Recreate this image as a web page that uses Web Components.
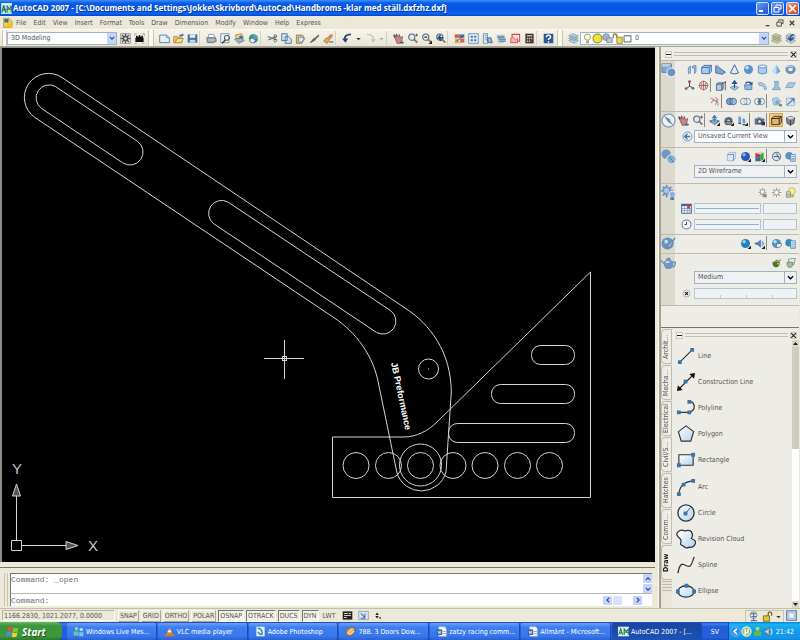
<!DOCTYPE html>
<html lang="en">
<head>
<meta charset="utf-8">
<title>AutoCAD 2007</title>
<style>
html, body { margin: 0; height: 100%; }
body {
  --face: #ece9d8; --pane: #edece6; --line: #aca899; --blue: #1b5cd8; --field: #9db3c6;
  font: 7px/10px "DejaVu Sans Condensed", "DejaVu Sans", "Liberation Sans", sans-serif;
  color: #555; background: var(--face);
}
</style>
</head>
<body>
<cad-app></cad-app>
<script>
const B = '#3f74ad', L = '#a9cdee', D = '#2b4f7c';
const tag = '<path d="M16 11v5h-5z" fill="#222"/>';
const arrow = '<path d="M2 5l6 6 6-6" fill="none" stroke="#33508c" stroke-width="3"/>';
const sphere = (c, hi) => `<circle cx="8" cy="8" r="6.5" fill="${c}"/><circle cx="6" cy="5.5" r="2.5" fill="${hi}" opacity=".8"/>`;
const lens = `<circle cx="7" cy="6" r="4.5" fill="#dce9f5" stroke="#55687c" stroke-width="1.6"/><path d="M10 9l5 5" stroke="#8a7450" stroke-width="2.5"/>`;
const stack = (c) => `<path d="M1 11l6-3 8 3-6 4zM1 7.500l6-3 8 3-6 4zM1 4l6-3 8 3-6 4z" fill="${c}" stroke="#5d7ba0" stroke-width=".8"/>`;
const globe = `<circle cx="8" cy="8" r="6.500" fill="#4aa3d0"/><path d="M3 4q4-3 5 1t-4 4-3-1zM9 9q5-2 5 1t-5 3z" fill="#3f9a57"/>`;
const box = `<path d="M1 5l3-3h11v9l-3 3H1z" fill="${L}" stroke="${B}" stroke-width="1.400"/><path d="M1 5h11v9M12 5l3-3" fill="none" stroke="${B}" stroke-width="1.400"/>`;
const ICONS = {
  app: '<rect width="16" height="16" fill="#b9ded6"/><path d="M1 14L4 4l3 10M2 10h5" fill="none" stroke="#1f6f60" stroke-width="1.600"/><path d="M9 14V4l3 5 3-5v10M8 9h8" fill="none" stroke="#1f6f60" stroke-width="1.400"/><path d="M1 1h14v2H1z" fill="#e8f6f2"/>',
  doc: '<path d="M1 2h8l4 4v9H1z" fill="#f5d34a" stroke="#ad8220"/><path d="M2 3h6v5H2z" fill="#2f6fb4"/><path d="M6 9h9l-2 6H5z" fill="#f3bd2f"/>',
  gear: '<rect x="1" y="1" width="14" height="14" fill="#dfe2de" stroke="#888"/><path d="M8 1v14M1 8h14M3 3l10 10M13 3L3 13" stroke="#555" stroke-width="2"/><circle cx="8" cy="8" r="4" fill="#555"/><circle cx="8" cy="8" r="1.700" fill="#eee"/>',
  home: '<path d="M3 4h2v1h2V3h2v2h2V4h2v3h1v6H2V7h1z" fill="#111"/><path d="M1 1h3M12 1h3M1 15h3M12 15h3M1 1v3M15 1v3" stroke="#888"/>',
  fresh: '<path d="M1 3h10l4 4v7H1z" fill="#e3f0fb" stroke="#56799c" stroke-width="1.300"/><path d="M11 3v4h4" fill="none" stroke="#56799c"/>',
  open: '<path d="M1 5h5l1 2h6v7H1z" fill="#eac264" stroke="#9e7a2c"/><path d="M3 14l3-6h9l-3 6z" fill="#f8df8e" stroke="#9e7a2c"/><path d="M8 5q2-4 6-3l-1-2 3 3-3 2" fill="#45709c"/>',
  save: `<path d="M1 2h14v12H1z" fill="${B}"/><path d="M4 2h8v5H4z" fill="#dfeaf5"/><path d="M4 10h8v4H4z" fill="#c9d4df"/>`,
  print: '<path d="M4 2h7l2 5H3z" fill="#fff" stroke="#5e7590"/><path d="M1 7h13l1 5-4 2H2z" fill="#91a8c4" stroke="#4c6180"/><path d="M4 10h8" stroke="#f1d270" stroke-width="1.500"/>',
  preview: '<path d="M1 1h12v13H1z" fill="#e6f0fa" stroke="#56799c"/><circle cx="10" cy="7" r="3.500" fill="#fff" stroke="#556" stroke-width="1.500"/><path d="M8 10l-5 5" stroke="#333" stroke-width="2"/>',
  publish: '<path d="M2 3l9-2 3 6-9 5z" fill="#f4d76b" stroke="#8c7438"/><path d="M1 9l9-2 5 4-8 4z" fill="#9cb4ce" stroke="#50647f"/><circle cx="10" cy="6" r="2.500" fill="#46709f"/>',
  dwf: globe + '<path d="M5 7l6 3-3 5-6-3z" fill="#eef" stroke="#557"/>',
  cut: '<path d="M1 5l13 5M2 10l12-5" stroke="#6b7684" stroke-width="1.600"/><circle cx="12" cy="4.500" r="2" fill="none" stroke="#456"/><circle cx="12" cy="11" r="2" fill="none" stroke="#456"/>',
  copy: '<path d="M1 1h8v10H1zM6 5h5l4 4v6H6z" fill="#cfe2f4" stroke="#4f749b" stroke-width="1.300"/>',
  paste: '<path d="M2 3h9l3 5-4 7H2z" fill="#e2c27c" stroke="#74643f"/><path d="M5 6h6l2 3-3 4H5z" fill="#d9e9f6" stroke="#5b7896"/>',
  brush: '<path d="M2 14l5-6 2 2z" fill="#8c6648" stroke="#4b3524"/><path d="M7 8l7-6 1 2-6 6z" fill="#58697b"/>',
  match: '<path d="M1 12l4-5 4 3-3 5z" fill="#e7ae42" stroke="#946b24"/><path d="M6 6l6-5 3 3-5 6z" fill="#c98f60"/><path d="M9 12h6v2H9z" fill="#678"/>',
  undo: '<path d="M13 2Q3 2 4 10" fill="none" stroke="#26466d" stroke-width="2.500"/><path d="M0 8h9l-4 6z" fill="#26466d"/>',
  redo: '<path d="M3 2q10 0 9 8" fill="none" stroke="#c0c4c6" stroke-width="2"/><path d="M8 9h8l-4 5z" fill="#c0c4c6"/>',
  dot: '<path d="M3 7h10l-5 5z" fill="#333"/>',
  dotoff: '<path d="M3 7h10l-5 5z" fill="#aaa"/>',
  hand: '<path d="M3 8L2 3l3 3V1l3 5 1-4 2 5 3-2-1 5-2 5H6z" fill="#c98780" stroke="#7d4a4c"/><path d="M0 4h5M2 2v5M10 14h6M13 11v5" stroke="#345d8b" stroke-width="1.400"/>',
  zoom: lens + '<path d="M12 3h4M14 1v4" stroke="#333"/>',
  zoomwin: lens + '<path d="M5 6h4" stroke="#345" stroke-width="2"/>' + tag,
  zoomprev: lens + '<path d="M12 7H5l3-4M5 7l4 4" fill="none" stroke="#234c82" stroke-width="2.400"/>',
  props: '<path d="M1 2h6v5H1z" fill="#d8564c"/><path d="M7 2h8v5H7z" fill="#59779c"/><path d="M1 8h5l3 7H2z" fill="#dbb55a"/><path d="M9 8h6v6H9z" fill="#c66"/><path d="M2 13L14 4" stroke="#334"/>',
  center: `<path d="M1 1h14v14H1z" fill="#e5eef6" stroke="${B}"/><path d="M4 4h3v3H4zM9 4h3v3H9zM4 9h3v3H4zM9 9h3v3H9z" fill="${B}"/>`,
  pal: `<path d="M2 1h6v14H2z" fill="#e5eef6" stroke="${B}"/><path d="M4 4h3M4 7h3M4 10h3" stroke="${B}"/><path d="M8 7h5l2 7H9z" fill="#9ab6d0" stroke="${D}"/>`,
  sheet: '<path d="M1 3l11-1 3 9-4 3H3z" fill="#aac4dc"/><path d="M2 6h10M4 9h10M5 12h9" stroke="#557a9c" stroke-width="1.500"/>',
  markup: '<path d="M3 2h11v10H3z" fill="#fae1e1" stroke="#d04a4a" stroke-width="1.500"/><path d="M1 8q3-4 5 0t5 0v6H1z" fill="#f4b4b4" stroke="#c33"/>',
  calc: '<path d="M2 1h12v14H2z" fill="#3a3232"/><path d="M4 3h8v2H4z" fill="#b5c9b0"/><path d="M4 7h2v2H4zM7 7h2v2H7zM10 7h2v2h-2zM4 11h2v2H4zM7 11h2v2H7z" fill="#d9c9c0"/><path d="M10 11h2v2h-2z" fill="#e33"/>',
  help: '<rect x="1" y="1" width="14" height="14" rx="1" fill="#2c5a94"/><path d="M5 6q0-3 3-3t3 3q0 1-3 3v1M8 12v2" fill="none" stroke="#fff" stroke-width="2"/>',
  layers: stack('#bcd3e8'), layers2: stack('#d9cf7a'),
  layers3: stack('#bcd3e8') + '<path d="M13 2Q7 3 8 9M5 7l3 4 4-4" fill="none" stroke="#2d4a78" stroke-width="2"/>',
  bulb: '<circle cx="8" cy="6" r="4.500" fill="#fffbd8" stroke="#8c8a5c" stroke-width="1.200"/><path d="M6 11h4v4H6z" fill="#a9a58a"/>',
  sun: '<circle cx="8" cy="8" r="6.500" fill="#efe23c" stroke="#8c8430" stroke-width="1.500"/>',
  vpsun: '<circle cx="6" cy="6" r="5" fill="#a6b4c2" stroke="#67788a"/><path d="M7 7h8v7H7z" fill="#b9c6d2" stroke="#67788a"/>',
  unlock: '<path d="M7 6h8v9H7z" fill="#e8dc4c" stroke="#75701f"/><path d="M7 7V3q-3-3-5 0v4" fill="none" stroke="#8c8430" stroke-width="2"/>',
  swatch: '<path d="M3 4h10v9H3z" fill="#fff" stroke="#555" stroke-width="1.300"/>',
  // dashboard
  big3d: '<path d="M1 2h10v9H1z" fill="#86a6cc" stroke="#587ba8"/><path d="M1 2h10l-3 3H1z" fill="#b7cde6"/><circle cx="11" cy="11" r="4.800" fill="#6d93c4" stroke="#fff"/>',
  compass: '<circle cx="8" cy="8" r="7" fill="#e9f0f5" stroke="#7693ac" stroke-width="1.200"/><path d="M3 3l7 4-2 3zM13 13L7 9l2-2z" fill="#6a89a8"/>',
  bigvs: '<circle cx="5.500" cy="5.500" r="5" fill="#6f97c5"/><circle cx="11" cy="11" r="5" fill="#8daed0" stroke="#e8eef4"/><path d="M9 8l4 6" stroke="#4c749f"/>',
  biglight: '<path d="M6 0v13M0 6h13M2 2l9 9M11 2l-9 9" stroke="#6a90bd" stroke-width="2"/><circle cx="6" cy="6" r="3.500" fill="#a9c8e6" stroke="#5c84b3"/><circle cx="12" cy="10" r="3.500" fill="#8fb2da" stroke="#eef"/><path d="M10 13h4v3h-4z" fill="#5a7ba2"/>',
  bigmat: '<circle cx="7" cy="8" r="6.500" fill="#6c93c0"/><circle cx="5.500" cy="6" r="2" fill="#c4daf0"/><path d="M15 2l-7 8-2 3 4-2z" fill="#dfe7ee" stroke="#55779f"/>',
  teapot: '<path d="M3 7q5-3 10 0 1 6-3 8H6Q2 12 3 7z" fill="#6f95c2"/><path d="M3 9L0 6M13 8q3-2 2 2t-3 2M6 5q2-3 4 0z" stroke="#6f95c2" stroke-width="1.600" fill="none"/><path d="M5 8q3-1 4 0" stroke="#d5e5f5" stroke-width="1.500"/>',
  polysolid: `<path d="M2 5l3-2v10l-3 1zM8 3l5-1v9l-2 3V5L8 6z" fill="${L}" stroke="${B}"/>`,
  box, wedge: `<path d="M1 3l14 9-4 3-10-2z" fill="#7fa9d2" stroke="${D}"/><path d="M1 3l2-1 12 10" fill="${L}" stroke="${B}"/>`,
  cone: `<path d="M8 1l6 12q-6 3-12 0z" fill="#d9ebf8" stroke="${D}" stroke-width="1.200"/>`,
  sphere: sphere('#5b91cc', '#e4f2fd'),
  cyl: `<path d="M2 3v10q6 3 12 0V3z" fill="${L}" stroke="${B}"/><ellipse cx="8" cy="3.500" rx="6" ry="2" fill="#e6f3fd" stroke="${B}"/>`,
  pyramid: `<path d="M8 1l6 10-6 4-6-4z" fill="#78a8d8"/><path d="M8 1v14l-6-4z" fill="#c7e0f5"/>`,
  torus: '<ellipse cx="8" cy="8" rx="5.500" ry="4.500" fill="none" stroke="#6a92b8" stroke-width="4"/><path d="M3 5q4-4 9 0" fill="none" stroke="#d4e9f8" stroke-width="1.500"/>',
  ucs: '<path d="M8 9V2M8 9l-5 4M8 9l6 3" stroke="#333" stroke-width="1.300"/><circle cx="8" cy="2.500" r="2" fill="#944"/><circle cx="3" cy="12.500" r="2" fill="#a55"/><circle cx="13" cy="12" r="2" fill="#577"/>',
  ucs2: '<circle cx="8" cy="8" r="6" fill="none" stroke="#555"/><path d="M8 1v14M1 8h14M4 3q4 5 0 10M12 3q-4 5 0 10" fill="none" stroke="#b05050" stroke-width="1.200"/>',
  extr: `<path d="M2 6l3-2h7v9l-2 2H2z" fill="${L}" stroke="#445"/><path d="M2 6h8v9M10 6l2-2M15 15V3M13 5l2-3 1 3" fill="none" stroke="#333"/>`,
  press: `<path d="M2 11l6-3 6 3-6 4z" fill="${L}" stroke="${B}"/><path d="M8 12V3M5 5l3-4 3 4z" fill="${B}" stroke="${D}" stroke-width="1.500"/>`,
  sweep: `<path d="M2 7h11v7H3z" fill="#8db8df" stroke="${B}"/><path d="M3 4q5-4 10 0l1-2v5H9l2-1Q7 2 4 6z" fill="${D}"/>`,
  revolve: `<path d="M2 4q9-2 12 9l-3 1Q9 7 3 8z" fill="${L}" stroke="#7292ae"/>`,
  loft: `<path d="M5 2h6l-1 6 4 6H2l4-6z" fill="#9bc0e2" stroke="#6c92b5"/>`,
  plane: `<path d="M5 4h10l-4 7H1z" fill="#a9cbe9" stroke="#6c92b5"/>`,
  helix: '<path d="M2 3l5 2-4 5M9 2l4 3-4 8M6 7h7" fill="none" stroke="#c88" stroke-width="1.500"/><path d="M9 6l4 3v5" stroke="#56a" fill="none"/>',
  union: `<circle cx="5.500" cy="8" r="4.800" fill="#79a6cd" stroke="${D}"/><circle cx="10.500" cy="8" r="4.800" fill="#79a6cd" fill-opacity=".6" stroke="${D}"/>`,
  subtract: `<circle cx="10.500" cy="8" r="4.800" fill="#e7f0f6" stroke="${B}"/><circle cx="5.500" cy="8" r="4.800" fill="#e7f0f6" fill-opacity=".5" stroke="#567"/>`,
  inter: `<circle cx="10.500" cy="8" r="4.800" fill="none" stroke="#567"/><circle cx="5.500" cy="8" r="4.800" fill="none" stroke="#567"/><path d="M8 4q4 4 0 8-4-4 0-8" fill="${B}"/>`,
  slice: `<path d="M2 4l7-2 5 5-2 6H4z" fill="#b4d0ea" stroke="#7b9cbd"/><circle cx="9" cy="9" r="3" fill="#7ea8d1"/><path d="M12 12h4v3h-4z" fill="#678"/>`,
  flat: '<path d="M2 3h12v11H2z" fill="#cfe2f1" stroke="#8eb0cc"/><path d="M3 13l10-9M8 4h5v5" stroke="#527ea9" fill="none" stroke-width="1.500"/>',
  orbit: `<path d="M2 9l6-3 6 3-6 5z" fill="#8db3d8" stroke="${D}"/><path d="M8 10V1M5 5l3-4 3 4M1 8l3 3M15 8l-3 3" stroke="${B}" stroke-width="1.800" fill="none"/>` + tag,
  swivel: '<path d="M2 12q-1-9 6-9t6 8l-4 1q1-5-2-5t-2 5z" fill="#5d6a75"/><path d="M4 9h8v5H4z" fill="#8795a3" stroke="#333"/>' + tag,
  walk: `<path d="M2 2q4-1 4 3v5H2zM8 5q4-1 4 3v4H8z" fill="#6da0cf"/><path d="M2 11h4v2H2zM8 13h4v2H8z" fill="${D}"/>` + tag,
  camera: '<path d="M1 5h14v9H1z" fill="#5f7389"/><path d="M5 3h5v3H5z" fill="#88a"/><circle cx="8" cy="9.500" r="3" fill="#b9d6ee" stroke="#223"/><path d="M11 10h5v5h-5z" fill="#334"/>',
  parallel: '<path d="M1 5l3-3h11v9l-3 3H1z" fill="#e3b56c" stroke="#333" stroke-width="1.300"/><path d="M1 5h11v9M12 5l3-3" fill="none" stroke="#333" stroke-width="1.500"/>',
  persp: '<path d="M2 4l6-2 6 2-1 8-5 3-5-3z" fill="#7d868e" stroke="#333"/><path d="M2 4l6 3 6-3-6-2z" fill="#d3d8dc"/><path d="M8 7v8" stroke="#222"/>',
  back: `<circle cx="8" cy="8" r="6.500" fill="#eef3f6" stroke="#6b8cab" stroke-width="1.300"/><path d="M12 8H5M8 4L4 8l4 4" fill="none" stroke="${B}" stroke-width="2"/>`,
  hidden: '<path d="M2 5l3-3h9v8l-3 4H2z" fill="#d6e4f7" stroke="#8ba8d6"/><path d="M2 5h9v9" fill="none" stroke="#7795cb" stroke-width="1.500"/>',
  shade: sphere('#2c58b8', '#a8c6f4') + tag,
  rgb: '<path d="M2 3h7v6H2z" fill="#c9363a"/><path d="M2 9h7v6H2z" fill="#3868b0"/><path d="M9 5l5-3v10l-5 3z" fill="#35a34a"/><path d="M2 3l4-2h8L9 5z" fill="#ded0b4"/>' + tag,
  vs1: '<circle cx="8" cy="8" r="6" fill="#d5dee5" stroke="#708498" stroke-width="1.500"/><path d="M4 8h8M8 4l5 8" stroke="#54708e" stroke-width="1.500"/>',
  vs2: `<circle cx="6" cy="7" r="5.500" fill="#5793c7"/><path d="M8 5h7v10H8z" fill="#eef4f9" stroke="${B}"/><path d="M9 8h5M9 11h5M9 13h5" stroke="${B}"/>`,
  light1: '<path d="M8 1v13M2 8h12M4 3l8 10M12 3L4 13" stroke="#999"/><circle cx="8" cy="7" r="3.500" fill="#eee" stroke="#777"/><path d="M9 10h5v5H9z" fill="#888"/>',
  light2: '<path d="M8 1v14M1 8h14M3 3l10 10M13 3L3 13" stroke="#a2a2a2" stroke-width="1.500"/><circle cx="8" cy="8" r="3.500" fill="#f5f5f5" stroke="#888"/>',
  light3: '<circle cx="10" cy="6" r="5" fill="#f7ef9a" stroke="#b5a440"/><path d="M2 7h6v8H2z" fill="#dfe8f0" stroke="#777"/><path d="M4 9v5M6 9v5" stroke="#777"/><path d="M9 11h4v4H9z" fill="#c7a93c"/>',
  cal: '<path d="M1 2h14v13H1z" fill="#fff" stroke="#46669a" stroke-width="1.500"/><path d="M1 3h14" stroke="#46669a" stroke-width="3"/><path d="M5 3v12M9 3v12M12 3v12M1 8h14M1 11h14" stroke="#6884b0"/><path d="M9 4h4v4H9z" fill="#d33"/>',
  clock: '<circle cx="8" cy="8" r="6.500" fill="#f6f8fb" stroke="#667a9c" stroke-width="1.500"/><path d="M8 4v4H5" fill="none" stroke="#333" stroke-width="1.300"/>',
  mat: sphere('#1f7fbf', '#b5e3f7') + tag,
  attach: `<path d="M1 7l4-1 5-4v12l-5-4-4-1z" fill="#4b83bb"/><path d="M12 4v8M14 6v4" stroke="${B}"/>` + tag,
  map: sphere('#4792c8', '#d9effa') + '<path d="M8 8h7v3l-3 3H8z" fill="#dfeaf2" stroke="#567"/>',
  matlist: `<circle cx="6" cy="7" r="5.500" fill="#2d8bc6"/><path d="M8 4h7v11H8z" fill="#eef4f9" stroke="${B}"/><path d="M9 7h5M9 10h5M9 13h5" stroke="${B}"/>`,
  render: '<path d="M2 8q6-4 11 0-1 6-4 7H6Q2 13 2 8z" fill="#4d6f3c"/><path d="M5 6q3-4 6-1l4-3-2 5z" fill="#83a457"/><path d="M9 9l5 3" stroke="#e2c136" stroke-width="2"/>',
  rset: '<path d="M5 3l10-1-2 9H5z" fill="#e9efe9" stroke="#777"/><path d="M3 8q5-2 9 0-1 6-3 7H5Q2 12 3 8z" fill="#a4b8a2" stroke="#6d7d6c"/>',
  cancel: '<circle cx="8" cy="8" r="5" fill="#f1f1f1" stroke="#999"/><path d="M6 6l4 4M10 6l-4 4" stroke="#222" stroke-width="2"/>',
  // status bar and tray
  model: '<path d="M1 2h14v12H1z" fill="#222"/><path d="M3 5h6M3 8h10M3 11h4M10 5h3" stroke="#cfcfcf" stroke-width="1.500"/>',
  layout: '<path d="M1 2h14v12H1z" fill="#d9e6f2" stroke="#6e93b8"/><path d="M4 5l6 6M10 5v7H4" stroke="#3b6ea6" fill="none" stroke-width="1.500"/>',
  updown: '<path d="M3 7l4-6 4 6zM3 9h8l-4 6z" fill="#222"/><path d="M12 12h4v3h-4z" fill="#222"/>',
  comm: '<circle cx="8" cy="6" r="5" fill="#dfe5ea" stroke="#667f98"/><path d="M4 4h8M8 2v12M5 8h7M4 14h9" stroke="#5874a0" stroke-width="1.500"/>',
  lock: '<path d="M2 7h9v8H2z" fill="#dfc72d" stroke="#5b5010"/><path d="M9 7V3q2-3 5 0v4" fill="none" stroke="#5b5010" stroke-width="1.600"/>',
  clean: '<path d="M1 1h14v14H1z" fill="#c6dcf2" stroke="#567aa4" stroke-width="1.600"/><path d="M4 4h8v8H4z" fill="#e9f3fc" stroke="#88a8c8"/>',
  flag: '<path d="M2 4q3-3 6-1L7 8Q4 6 1 8z" fill="#e8512e"/><path d="M9 3q3 2 6 0l-1 5q-3 2-6 0z" fill="#86c440"/><path d="M1 9q3-2 6 0l-1 5q-3-2-6 0z" fill="#4d8be6"/><path d="M8 9q3 2 6 0l-1 5q-3 2-6 0z" fill="#f7cf35"/>',
  msn: '<circle cx="5" cy="4" r="2.500" fill="#8be08f"/><path d="M1 8h7v6H1z" fill="#64c7a0"/><circle cx="12" cy="5" r="2.500" fill="#a8e3f5"/><path d="M9 9h6v6H9z" fill="#74c3ec"/>',
  vlc: '<path d="M8 1l4 11H4z" fill="#f08a2c"/><path d="M6 6h4l1 3H5z" fill="#fff"/><path d="M1 12h14v3H1z" fill="#e37324"/>',
  ps: '<path d="M2 1h12v14H2z" fill="#e9f2f4"/><path d="M4 3q8 2 6 10M4 9l5 4" stroke="#3b98a8" stroke-width="2.400" fill="none"/>',
  amp: '<ellipse cx="8" cy="8" rx="7" ry="5" transform="rotate(-40 8 8)" fill="#e8a74d" stroke="#8d5b22"/><path d="M4 11l7-7M7 13l6-6" stroke="#fae1ae" stroke-width="1.500"/>',
  word: '<path d="M4 1h9l2 3v11H4z" fill="#f4f7fb" stroke="#aac"/><path d="M1 5h8v8H1z" fill="#2e5fae"/><path d="M3 7l1 4 1-3 1 3 1-4" fill="none" stroke="#fff"/><path d="M10 8h4M10 11h4" stroke="#77a"/>',
  cad: '<path d="M0 1h16v14H0z" fill="#dff1e6"/><path d="M1 13L4 4l3 9M2 10h4M9 13V4l3 4 3-4v9M8 9h8" fill="none" stroke="#217c66" stroke-width="1.500"/>',
  chev: '<circle cx="8" cy="8" r="7" fill="#2f8ce8" stroke="#8ec5fa"/><path d="M10 4L6 8l4 4" fill="none" stroke="#fff" stroke-width="2.500"/>',
  ut: '<circle cx="8" cy="8" r="6.500" fill="#8bbc6a" stroke="#dbe9d0" stroke-width="2"/><path d="M6 4v6h4V4M6 10v3" fill="none" stroke="#fff" stroke-width="2"/>',
  buddy: '<circle cx="8" cy="4" r="3" fill="#a9dc5b"/><path d="M3 9q5-4 10 0v5H3z" fill="#6db83a"/>',
  vol: '<path d="M2 6h3l4-4v12l-4-4H2z" fill="#c9cdd6" stroke="#556"/><path d="M11 4q4 4 0 9" fill="none" stroke="#dde" stroke-width="1.600"/>',
  // drawing tools
  line: '<path d="M4 17L17 4" stroke="#333" stroke-width="1.200"/><path d="M2 15h4v4H2zM15 2h4v4h-4z" fill="#3a75aa"/>',
  xline: '<path d="M3 18L18 3" stroke="#222" stroke-width="1.400"/><path d="M1 20l1-6 5 5zM20 1l-6 1 5 5z" fill="#111"/><path d="M8 8h4v4H8z" fill="#3a75aa"/>',
  pline: '<path d="M3 15h11q6-2 5-7t-6-4" fill="none" stroke="#333" stroke-width="1.300"/><path d="M1 13h4v4H1zM12 13h4v4h-4zM12 2h4v4h-4z" fill="#3a75aa"/>',
  polygon: '<path d="M10.500 2l8 6-3 10h-10l-3-10z" fill="url(#g)" stroke="#333" stroke-width="1.200"/>',
  rect: '<path d="M3 5h15v11H3z" fill="url(#g)" stroke="#333" stroke-width="1.200"/><path d="M16 3h4v4h-4zM1 14h4v4H1z" fill="#3a75aa"/>',
  arc: '<path d="M3 18Q4 5 18 4" fill="none" stroke="#333" stroke-width="1.200"/><path d="M1 16h4v4H1zM6 6h4v4H6zM16 2h4v4h-4z" fill="#3a75aa"/>',
  circle: '<circle cx="10.500" cy="10.500" r="8.500" fill="url(#g)" stroke="#333" stroke-width="1.400"/><path d="M10 11l5-6" stroke="#357"/><path d="M8 9h4v4H8z" fill="#3a75aa"/>',
  cloud: '<path d="M4 10Q-1 6 2 3t7-1q7-2 8 3 1 2-1 5 6 2 4 6t-6 3q-4 2-6-1-4-1-3-4 1-2-1-4z" fill="url(#g)" stroke="#333" stroke-width="1.300"/>',
  spline: '<path d="M2 19Q4 8 8 10t6 2 5-10" fill="none" stroke="#333" stroke-width="1.400"/>',
  ellipse: '<ellipse cx="10.500" cy="11" rx="8.500" ry="6" fill="url(#g)" stroke="#333" stroke-width="1.400"/><path d="M9 3h4v4H9zM0 9h4v4H0zM17 9h4v4h-4z" fill="#3a75aa"/>',
};
const svg = (name, box = 16) => `<svg class="ico" viewBox="0 0 ${box} ${box}" aria-hidden="true"><defs><linearGradient id="g" x2="1" y2="1"><stop offset="0" stop-color="#fff"/><stop offset="1" stop-color="#b4d3ee"/></linearGradient></defs>${ICONS[name]}</svg>`;
const RESET = `*{box-sizing:border-box}button,input,select{font:inherit;color:inherit;margin:0;padding:0;border:0;background:none;border-radius:0;outline:0;min-width:0}
.ico{display:block;width:11px;height:11px;flex:none}`;
const define = (name, css, html) => customElements.define(name, class extends HTMLElement {
  connectedCallback() {
    if (this.shadowRoot) return;
    const root = this.attachShadow({ mode: 'open' });
    root.innerHTML = `<style>${RESET}${css}</style>${typeof html === 'function' ? html(this) : html}`;
  }
});

define('ui-icon', ':host{display:block;flex:none}', e => svg(e.getAttribute('name')));

define('tool-button', `
  :host{display:block;flex:none;width:14px}
  :host([narrow]){width:9px}
  button{display:flex;align-items:center;justify-content:center;width:100%;height:14px}
  :host([narrow]) .ico{width:7px;height:7px}
  :host([on]) button{background:#fbc878;outline:1px solid #d9a154;outline-offset:-1px}`,
  e => `<button aria-label="${e.getAttribute('label') || e.getAttribute('icon')}">${svg(e.getAttribute('icon'))}</button>`);

define('tool-sep', ':host{display:block;flex:none;width:5px;height:14px;border-left:1px solid #d6d2c2}:host([dark]){width:3px;border-color:#8d8a7c}', '');
define('tool-grip', ':host{display:block;flex:none;width:6px;height:16px;border:solid #c9c5b2;border-width:0 1px;margin:0 3px 0 2px;background:#faf9f3}', '');

define('drop-list', `
  :host{display:flex;border:1px solid var(--field);background:#fdfdfd;height:13px;min-width:0}
  label{flex:1;display:flex;align-items:center;min-width:0}
  select{appearance:none;flex:1;height:11px;line-height:11px;padding-left:3px;width:100%}
  .arrow{width:9px;align-self:stretch;background:#c3d3fb;display:flex;align-items:center;justify-content:center;pointer-events:none}
  .arrow svg{width:6px;height:6px}
  :host([plain]) .arrow{background:none;border-left:1px solid var(--field);width:12px}
  :host([plain]) .arrow svg{width:7px;height:7px;filter:brightness(0)}
  :host([dim]){background:#eff1f2}`,
  e => `<label><slot></slot><select aria-label="${e.getAttribute('label')}"><option>${e.getAttribute('value')}</option></select><span class="arrow"><svg viewBox="0 0 16 16">${arrow}</svg></span></label>`);

define('title-bar', `
  :host{display:flex;align-items:center;height:16px;padding:0 1px;gap:1px;color:#fff;font:bold 8px/14px "Open Sans","Noto Sans",sans-serif;
    background:linear-gradient(#3a90f7,#0a5be6 20%,#0355e2 55%,#0a63f5 85%,#0346c5)}
  h1{font:inherit;margin:0;flex:1;white-space:nowrap;overflow:hidden;text-shadow:1px 1px 0 #0b3a94}
  button{width:13px;height:13px;border:1px solid #cfe0fb;border-radius:2px;background:linear-gradient(135deg,#6a98f5,#1f51cf);display:flex;align-items:center;justify-content:center;margin-left:1px}
  button.close{background:linear-gradient(135deg,#f09a7c,#cf3d12)}
  button svg{width:9px;height:9px}`,
  `${svg('app')}<h1>AutoCAD 2007 - [C:\\Documents and Settings\\Jokke\\Skrivbord\\AutoCad\\Handbroms -klar med ställ.dxfzhz.dxf]</h1>
  <button aria-label="Minimize"><svg viewBox="0 0 9 9"><path d="M1 7h4" stroke="#fff" stroke-width="2"/></svg></button>
  <button aria-label="Restore"><svg viewBox="0 0 9 9"><path d="M3 3V1h5v4H6M1 3.500h5V8H1z" fill="none" stroke="#fff"/></svg></button>
  <button class="close" aria-label="Close"><svg viewBox="0 0 9 9"><path d="M1 1l7 7M8 1L1 8" stroke="#fff" stroke-width="1.600"/></svg></button>`);

define('menu-bar', `
  :host{display:flex;align-items:center;height:13px;padding:0 3px;background:var(--face)}
  nav{display:flex;gap:7px;flex:1;padding-left:2px}
  button{white-space:nowrap}
  .win{display:flex;gap:1px}.win button{width:11px;height:11px;display:grid;place-items:center}
  .win svg{width:8px;height:8px}`,
  `${svg('doc')}<nav>${'File Edit View Insert Format Tools Draw Dimension Modify Window Help Express'.split(' ').map(t => `<button>${t}</button>`).join('')}</nav>
  <div class="win"><button aria-label="Minimize drawing"><svg viewBox="0 0 9 9"><path d="M2 7.500h4" stroke="#444" stroke-width="1.500"/></svg></button>
  <button aria-label="Restore drawing"><svg viewBox="0 0 9 9"><path d="M3 3V1h5v4H6M1 3.500h5V8H1z" fill="none" stroke="#444"/></svg></button>
  <button aria-label="Close drawing"><svg viewBox="0 0 9 9"><path d="M2 2l5 5M7 2L2 7" stroke="#444" stroke-width="1.500"/></svg></button></div>`);

const tools = (s) => s.split(' ').map(n =>
  n === '|' ? '<tool-sep></tool-sep>' : n === '!' ? '<tool-sep dark></tool-sep>' : n === '#' ? '<tool-grip></tool-grip>' :
  n.startsWith('dot') ? `<tool-button narrow icon="${n}" label="More"></tool-button>` : n.endsWith('*') ? `<tool-button on icon="${n.slice(0, -1)}"></tool-button>` : `<tool-button icon="${n}"></tool-button>`).join('');

define('tool-bar', `
  :host{display:flex;align-items:center;height:18px;background:linear-gradient(#f6f4ea,#e9e6d6);border-top:1px solid #fbfaf5;border-bottom:1px solid #a8a596;padding-right:3px}
  .space{width:110px;margin-right:1px;flex:none}
  .first{margin-right:0;width:5px}
  .layer{flex:1}
  .icons{display:flex;padding-left:1px}.icons ui-icon{width:10px}`,
  `<tool-grip class="first"></tool-grip><drop-list class="space" label="Workspace" value="3D Modeling"></drop-list>${tools('gear home # fresh open save | print preview publish dwf | cut copy paste brush match | undo dot redo dotoff | hand zoom zoomwin zoomprev | props center pal sheet markup calc | help # layers')}
  <drop-list class="layer" label="Layer" value="0"><span class="icons"><ui-icon name="bulb"></ui-icon><ui-icon name="sun"></ui-icon><ui-icon name="vpsun"></ui-icon><ui-icon name="unlock"></ui-icon><ui-icon name="swatch"></ui-icon></span></drop-list>${tools('layers2 layers3')}`);

define('drawing-view', `
  :host{display:block;background:#000;border:solid #8f8d83;border-width:1px 0 0 2px;min-height:0;flex:1}
  svg{display:block;width:100%;height:100%}
  .w{fill:none;stroke:#d4d4d4;stroke-width:1}`,
  `<svg viewBox="2 48 653 514" preserveAspectRatio="xMinYMin meet" role="img" aria-label="Handbrake drawing"><g class="w">
  <path d="M62 77.500L405 308C430 324 451 352 451.300 392L446 472A25.500 25.500 0 0 1 397 473L379 386C374 356 356 332 333 317L35 117.500A24 24 0 0 1 62 77.500"/>
  <path d="M55.700 86.700L137.300 141.200A13 13 0 0 1 122.700 162.800L41.300 108.300A13 13 0 0 1 55.700 86.700"/>
  <path d="M228.200 202.200L390.700 310.700A13 13 0 0 1 376.300 332.300L213.800 223.800A13 13 0 0 1 228.200 202.200"/>
  <path d="M332.500 437H404C416 437 428 431 437 422L590.500 272V497.500H332.500z"/>
  <rect x="531.500" y="345.500" width="43" height="19" rx="9"/><rect x="491.500" y="384.500" width="83" height="19" rx="9"/><rect x="448.500" y="423.500" width="126" height="19" rx="9"/>
  ${[356, 388.5, 420.5, 453, 485, 517.5, 549.5].map(x => `<circle cx="${x}" cy="465.500" r="13"/>`).join('')}
  <circle cx="420.500" cy="465" r="21"/><circle cx="428.500" cy="369" r="10"/><path d="M428 369h1"/>
  <path d="M284.500 340v39M264 358.500h40"/><rect x="282.500" y="356.500" width="4" height="4"/>
  <path d="M11.500 540.500h10v10h-10zM16.500 540V484M22 545.500h56"/>
  <path d="M16.500 484l-4 12h8zM78 545.500l-12-4v8z" fill="#555"/></g>
  <g fill="#c4c4c4" font-family="Liberation Sans" font-size="15"><text x="12" y="474">Y</text><text x="88" y="551">X</text></g>
  <text transform="translate(391 363) rotate(78)" fill="#fff" font-family="Liberation Sans" font-weight="bold" font-size="9">JB Preformance</text></svg>`);

define('command-window', `
  :host{display:block;background:var(--face);border-top:1px solid #77756c;margin-top:5px;padding:5px 3px 2px 4px;font:8px/11px "Liberation Mono",monospace;color:#6d6d6d}
  .row{display:flex}.grip{width:4px;border:solid #c6c3b2;border-width:0 1px;margin-right:2px}
  .box{flex:1;border:solid #777;border-width:1px 0 0 1px;background:#fff}
  .hist{display:flex;height:20px;border-bottom:1px solid #b5b5b5}.hist p{margin:0;flex:1}
  .cmd{display:flex;height:12px;align-items:center}label{flex:none}input{flex:1}
  .v{width:9px;display:flex;flex-direction:column;gap:1px}.h{display:flex;gap:1px;margin-right:10px}
  .v button,.h button{width:9px;height:9px;background:#c3d3fb;border-radius:1px;display:grid;place-items:center}
  .h i{width:9px;background:#d6e1fd}.h b{width:9px}
  svg{width:6px;height:6px}`,
  (() => { const b = (r, l) => `<button aria-label="Scroll ${l}"><svg viewBox="0 0 16 16"><g transform="rotate(${r} 8 8)">${arrow}</g></svg></button>`;
  return `<div class="row"><div class="grip"></div><div class="box"><div class="hist"><p>Command: _open</p><div class="v">${b(180, 'up')}${b(0, 'down')}</div></div>
  <div class="cmd"><label for="c">Command:</label><input id="c"><div class="h">${b(90, 'left')}<i></i><b></b>${b(-90, 'right')}</div></div></div></div>`; })());

define('pane-head', `
  :host{display:flex;align-items:center;gap:2px;height:10px;padding:0 2px 0 4px}
  i{flex:1;height:4px;border:solid #c2bfb2;border-width:1px 0}
  button{width:7px;height:7px;border:1px solid #c9c6ba;background:#f7f6f2;display:grid;place-items:center}svg{width:5px;height:5px}`,
  `<button aria-label="Collapse"><svg viewBox="0 0 5 5"><path d="M0 2.500h5" stroke="#222"/></svg></button><i></i><button aria-label="Close panel"><svg viewBox="0 0 5 5"><path d="M0 0l5 5M5 0L0 5" stroke="#222" stroke-width="1.200"/></svg></button>`);

define('dash-section', `
  :host{display:flex;border-top:1px solid #bdbab0}
  .side{width:14px;flex:none;background:#dcd9ce;padding:1px 0}
  .side .ico{width:15px;height:15px}
  .body{flex:1;min-width:0;display:flex;flex-direction:column;padding:1px 2px 3px 5px;gap:2px}`,
  e => `<div class="side">${svg(e.getAttribute('icon'))}</div><div class="body"><slot></slot></div>`);

define('slider-row', `
  :host{display:flex;align-items:center;gap:2px;height:14px}
  .ico{margin:0 0 0 1px}
  input{background:#eff1f2;border:1px solid #b4c5d2;height:11px}
  input[type=range]{appearance:none;flex:2;width:0;background:linear-gradient(#8fb0cc,#8fb0cc) center/calc(100% - 2px) 1px no-repeat #f0f2f3}
  input[type=range]::-webkit-slider-thumb{appearance:none;width:1px;height:1px}
  input[type=text]{flex:1;width:0}
  :host([single]) input{background:repeating-linear-gradient(90deg,transparent 0 25px,#c5ced5 25px 26px) bottom/100% 3px no-repeat #f0f2f3}`,
  e => svg(e.getAttribute('icon')) + `<input type="range" aria-label="${e.getAttribute('label')}">` + (e.hasAttribute('single') ? '' : `<input type="text" aria-label="${e.getAttribute('label')} value">`));

define('dash-board', `
  :host{display:block;background:var(--pane);min-height:281px;padding-top:2px;border-bottom:1px solid #77756c}
  .r{display:flex;justify-content:flex-end;align-items:center}
  .line{display:flex;align-items:center}.line drop-list{flex:1}.pad{margin-left:14px}
  .s1,.s4{min-height:51px}.s2,.s3{min-height:36px}.s5{min-height:19px}.s6{min-height:52px}
  pane-head{margin-bottom:1px}.end{border-top:1px solid #bdbab0}`,
  `<pane-head></pane-head>
  <dash-section class="s1" icon="big3d"><div class="r">${tools('polysolid box wedge cone sphere cyl pyramid torus')}</div><div class="r">${tools('ucs ucs2 ! extr press sweep revolve loft plane')}</div><div class="r">${tools('helix ! union subtract inter ! slice flat')}</div></dash-section>
  <dash-section class="s2" icon="compass"><div class="r">${tools('hand zoom ! orbit swivel walk ! camera ! parallel* persp')}</div><div class="line">${tools('back')}<drop-list plain label="View" value="Unsaved Current View"></drop-list></div></dash-section>
  <dash-section class="s3" icon="bigvs"><div class="r">${tools('hidden shade rgb ! vs1 vs2')}</div><drop-list plain dim class="pad" label="Visual style" value="2D Wireframe"></drop-list></dash-section>
  <dash-section class="s4" icon="biglight"><div class="r">${tools('light1 light2 light3')}</div><slider-row icon="cal" label="Date"></slider-row><slider-row icon="clock" label="Time"></slider-row></dash-section>
  <dash-section class="s5" icon="bigmat"><div class="r">${tools('mat attach ! map matlist')}</div></dash-section>
  <dash-section class="s6" icon="teapot"><div class="r">${tools('render rset')}</div><drop-list plain dim class="pad" label="Render preset" value="Medium"></drop-list><slider-row single icon="cancel" label="Render progress"></slider-row></dash-section>
  <div class="end"></div>`);

define('palette-item', `
  :host{display:flex;flex:1}
  button{display:flex;align-items:center;gap:2px;width:100%;text-align:left}
  .ico{width:20px;height:20px}`,
  e => `<button>${svg(e.getAttribute('icon'), 21)}<span><slot></slot></span></button>`);

define('tool-palette', `
  :host{display:flex;flex:1;background:var(--pane);min-height:0;margin-top:1px}
  .tabs{width:11px;display:flex;flex-direction:column;gap:1px;background:#e8e5d8}
  .tabs button{height:35px;writing-mode:vertical-rl;transform:rotate(180deg);border:1px solid #c0bdb0;border-radius:0 4px 4px 0;background:var(--pane);text-align:center;line-height:9px;white-space:nowrap}
  .tabs button.on{font-weight:bold;color:#111;border-left-color:transparent}
  .tabs i{height:10px;margin-left:1px;background:repeating-linear-gradient(#c0bdb0 0 1px,transparent 1px 3px)}
  .main{flex:1;display:flex;flex-direction:column;padding-top:1px;min-width:0}
  .area{flex:1;display:flex;min-height:0}
  .list{flex:1;display:flex;flex-direction:column;padding:3px 0 4px 4px}
  .sb{width:7px;display:flex;flex-direction:column;background:#fff}
  .sb button{height:7px;background:#d8d5ca;display:grid;place-items:center}.sb svg{width:5px;height:5px}
  .sb .thumb{height:102px;background:#cfccc0}.sb .gap{flex:1}`,
  `<div class="tabs">${['Archit...', 'Mecha...', 'Electrical', 'Civil/S...', 'Hatches', 'Comm...'].map(t => `<button>${t}</button>`).join('')}<button class="on">Draw</button><i></i></div>
  <div class="main"><pane-head></pane-head><div class="area"><div class="list">${[['line', 'Line'], ['xline', 'Construction Line'], ['pline', 'Polyline'], ['polygon', 'Polygon'], ['rect', 'Rectangle'], ['arc', 'Arc'], ['circle', 'Circle'], ['cloud', 'Revision Cloud'], ['spline', 'Spline'], ['ellipse', 'Ellipse']].map(([i, t]) => `<palette-item icon="${i}">${t}</palette-item>`).join('')}</div>
  <div class="sb"><button aria-label="Scroll up"><svg viewBox="0 0 5 5"><path d="M0 4l2.500-3L5 4z" fill="#222"/></svg></button><div class="thumb"></div><div class="gap"></div><button aria-label="Scroll down"><svg viewBox="0 0 5 5"><path d="M0 1h5L2.500 4z" fill="#222"/></svg></button></div></div></div>`);

define('status-bar', `
  :host{display:flex;align-items:center;height:14px;padding:0 2px;background:var(--face);border-top:1px solid #c3c0b0}
  output{width:113px;height:11px;line-height:11px;border:1px solid;border-color:#b9b5a4 #fff #fff #b9b5a4;padding-left:1px;white-space:nowrap}
  .modes{display:flex;gap:2px;margin:0 3px}
  .t{height:12px;padding:0 1px;line-height:11px;border:1px solid;border-color:#fbfaf4 #aaa695 #aaa695 #fbfaf4}
  .on{border-color:#77756a #fff #fff #77756a;background:#f4f2e8}
  .flat{border-color:transparent}
  .views{display:flex;gap:2px;flex:1}.tray{display:flex;border:1px solid #c9c5b3;border-bottom:0;height:12px;align-items:center}`,
  `<output>1166.2830, 1021.2077, 0.0000</output><div class="modes">${[['SNAP'], ['GRID'], ['ORTHO'], ['POLAR'], ['OSNAP', 'on'], ['OTRACK', 'on'], ['DUCS', 'on'], ['DYN', 'on'], ['LWT', 'flat']].map(([t, c]) => `<button class="t ${c || ''}" aria-pressed="${c === 'on'}">${t}</button>`).join('')}</div>
  <div class="views">${tools('model layout')}<tool-button narrow icon="updown"></tool-button></div><div class="tray">${tools('comm lock dot')}</div>${tools('clean')}`);

define('task-button', `
  :host{display:flex;flex:1;min-width:0}
  button{display:flex;align-items:center;gap:2px;width:100%;height:17px;padding:0 6px;color:#fff;border-radius:2px;white-space:nowrap;background:linear-gradient(#6ba0fa,#3c7ff0 25%,#3a78ec 75%,#2a62d2);border-right:1px solid #1a4cb4}
  :host([on]) button{background:linear-gradient(#1a44a0,#1e52b8)}
  .ico{width:11px;height:11px}`,
  e => `<button>${svg(e.getAttribute('icon'))}<span><slot></slot></span></button>`);

define('task-bar', `
  :host{display:flex;align-items:center;height:19px;color:#fff;background:linear-gradient(#1941a5,#3a80f2 10%,#245edb 25%,#245edb 85%,#1941a5)}
  .start{height:100%;width:62px;display:flex;align-items:center;gap:3px;padding-left:6px;font:italic bold 10px/18px "Open Sans","Liberation Sans",sans-serif;color:#fff;text-shadow:1px 1px 1px #1d4d1b;background:linear-gradient(#67b668,#3c963c 20%,#3a9a3a 75%,#2a702a);border-radius:0 6px 7px 0}
  .start .ico{width:13px;height:13px}
  .tasks{flex:1;display:flex;gap:1px;margin-left:5px;min-width:0}
  .lang{width:26px;text-align:center}
  .tray{display:flex;align-items:center;height:100%;padding:0 6px 0 1px;background:linear-gradient(#0e7bd4,#19b2f3 12%,#129ae8 50%,#1197e6 85%,#0d6fc8);border-left:1px solid #0a4ea0}
  time{margin-left:2px}`,
  `<button class="start">${svg('flag')}Start</button><div class="tasks">
  <task-button icon="msn">Windows Live Mes...</task-button><task-button icon="vlc">VLC media player</task-button><task-button icon="ps">Adobe Photoshop</task-button><task-button icon="amp">788. 3 Doors Dow...</task-button><task-button icon="word">zatzy racing comm...</task-button><task-button icon="word">Allmänt - Microsoft...</task-button><task-button on icon="cad">AutoCAD 2007 - [...</task-button></div>
  <span class="lang">SV</span><div class="tray"><ui-icon name="chev"></ui-icon><ui-icon name="ut"></ui-icon><ui-icon name="buddy"></ui-icon><ui-icon name="vol"></ui-icon><time>21:42</time></div>`);

define('cad-app', `
  :host{display:flex;flex-direction:column;min-height:100vh}
  .work{flex:1;display:grid;grid-template-columns:minmax(0,1fr) 141px;min-height:0}
  .left{display:flex;flex-direction:column;min-width:0;border-right:1px solid #f8f7f0;padding-right:3px}
  .right{display:flex;flex-direction:column;min-width:0;border-left:2px solid #a5a294;padding-right:1px}`,
  `<title-bar></title-bar><menu-bar></menu-bar><tool-bar></tool-bar>
  <div class="work"><div class="left"><drawing-view></drawing-view><command-window></command-window></div>
  <div class="right"><dash-board></dash-board><tool-palette></tool-palette></div></div>
  <status-bar></status-bar><task-bar></task-bar>`);
</script>
</body>
</html>
